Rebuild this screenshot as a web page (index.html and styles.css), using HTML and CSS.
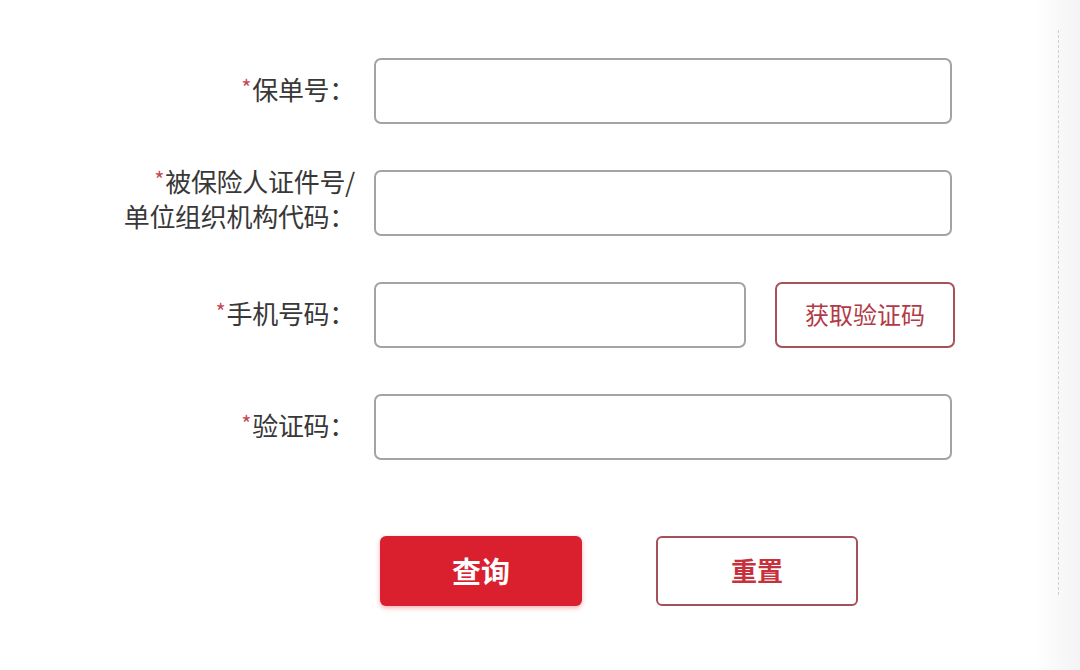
FILE: index.html
```html
<!DOCTYPE html>
<html lang="zh-CN">
<head>
<meta charset="utf-8">
<title>保单查询</title>
<link rel="stylesheet" href="styles.css">
</head>
<body>
<div class="page">
  <form class="form">
    <div class="row">
      <label class="label"><span class="req">*</span>保单号：</label>
      <div class="field"><input class="input" type="text"></div>
    </div>
    <div class="row">
      <label class="label two"><span class="req">*</span>被保险人证件号/<br>单位组织机构代码：</label>
      <div class="field"><input class="input" type="text"></div>
    </div>
    <div class="row">
      <label class="label"><span class="req">*</span>手机号码：</label>
      <div class="field">
        <input class="input short" type="text">
        <button type="button" class="code-btn">获取验证码</button>
      </div>
    </div>
    <div class="row">
      <label class="label"><span class="req">*</span>验证码：</label>
      <div class="field"><input class="input" type="text"></div>
    </div>
    <div class="actions">
      <button type="button" class="btn primary">查询</button>
      <button type="button" class="btn ghost">重置</button>
    </div>
  </form>
  <div class="edge"><div class="dash"></div></div>
</div>
</body>
</html>
```

FILE: styles.css
```css
html, body {
  margin: 0;
  padding: 0;
}
body {
  width: 1080px;
  height: 670px;
  overflow: hidden;
  font-family: "Noto Sans CJK SC", "Noto Sans", sans-serif;
  color: #383838;
  background: linear-gradient(to right, #ffffff 0, #ffffff 1035px, #f8f8f9 1060px, #f4f4f6 1080px);
}
.page {
  display: flex;
  height: 670px;
}
.form {
  width: 1040px;
  padding-top: 58px;
  display: flex;
  flex-direction: column;
  gap: 46px;
}
.row {
  display: flex;
  align-items: center;
  height: 66px;
}
.label {
  width: 355px;
  text-align: right;
  font-size: 26px;
  line-height: 35px;
  padding-right: 19px;
  padding-bottom: 7px;
  box-sizing: content-box;
  white-space: nowrap;
  letter-spacing: -0.3px;
}
.label.two {
  padding-bottom: 12px;
}
.req {
  color: #c44a5a;
  font-size: 22px;
  vertical-align: 4px;
  margin-right: 1px;
}
.field {
  display: flex;
  align-items: center;
  gap: 29px;
}
.input {
  width: 578px;
  height: 66px;
  box-sizing: border-box;
  border: 2px solid #a3a3a3;
  border-radius: 7px;
  background: #fff;
  outline: none;
  margin: 0;
  padding: 0 14px;
  font: inherit;
}
.input.short {
  width: 372px;
}
.code-btn {
  width: 180px;
  height: 66px;
  box-sizing: border-box;
  border: 2px solid #a9505b;
  border-radius: 7px;
  background: #fff;
  color: #b23a46;
  font-family: "Noto Sans CJK SC", sans-serif;
  font-size: 24px;
  padding: 0 0 3px;
}
.actions {
  display: flex;
  gap: 74px;
  padding-left: 380px;
  margin-top: 30px;
}
.btn {
  width: 202px;
  height: 70px;
  box-sizing: border-box;
  border-radius: 6px;
  font-family: "Noto Sans CJK SC", sans-serif;
  font-weight: 700;
  padding: 0 0 3px;
}
.primary {
  background: #da202f;
  border: none;
  color: #fff;
  font-size: 29px;
  box-shadow: 0 2px 5px rgba(218, 32, 47, 0.35);
}
.ghost {
  background: #fff;
  border: 2px solid #a5505a;
  color: #c8303c;
  font-size: 26px;
}
.edge {
  flex: 1;
  display: flex;
  justify-content: flex-end;
  padding-right: 21px;
}
.dash {
  margin-top: 30px;
  height: 565px;
  border-left: 1px dashed #cfcfd3;
}
```
